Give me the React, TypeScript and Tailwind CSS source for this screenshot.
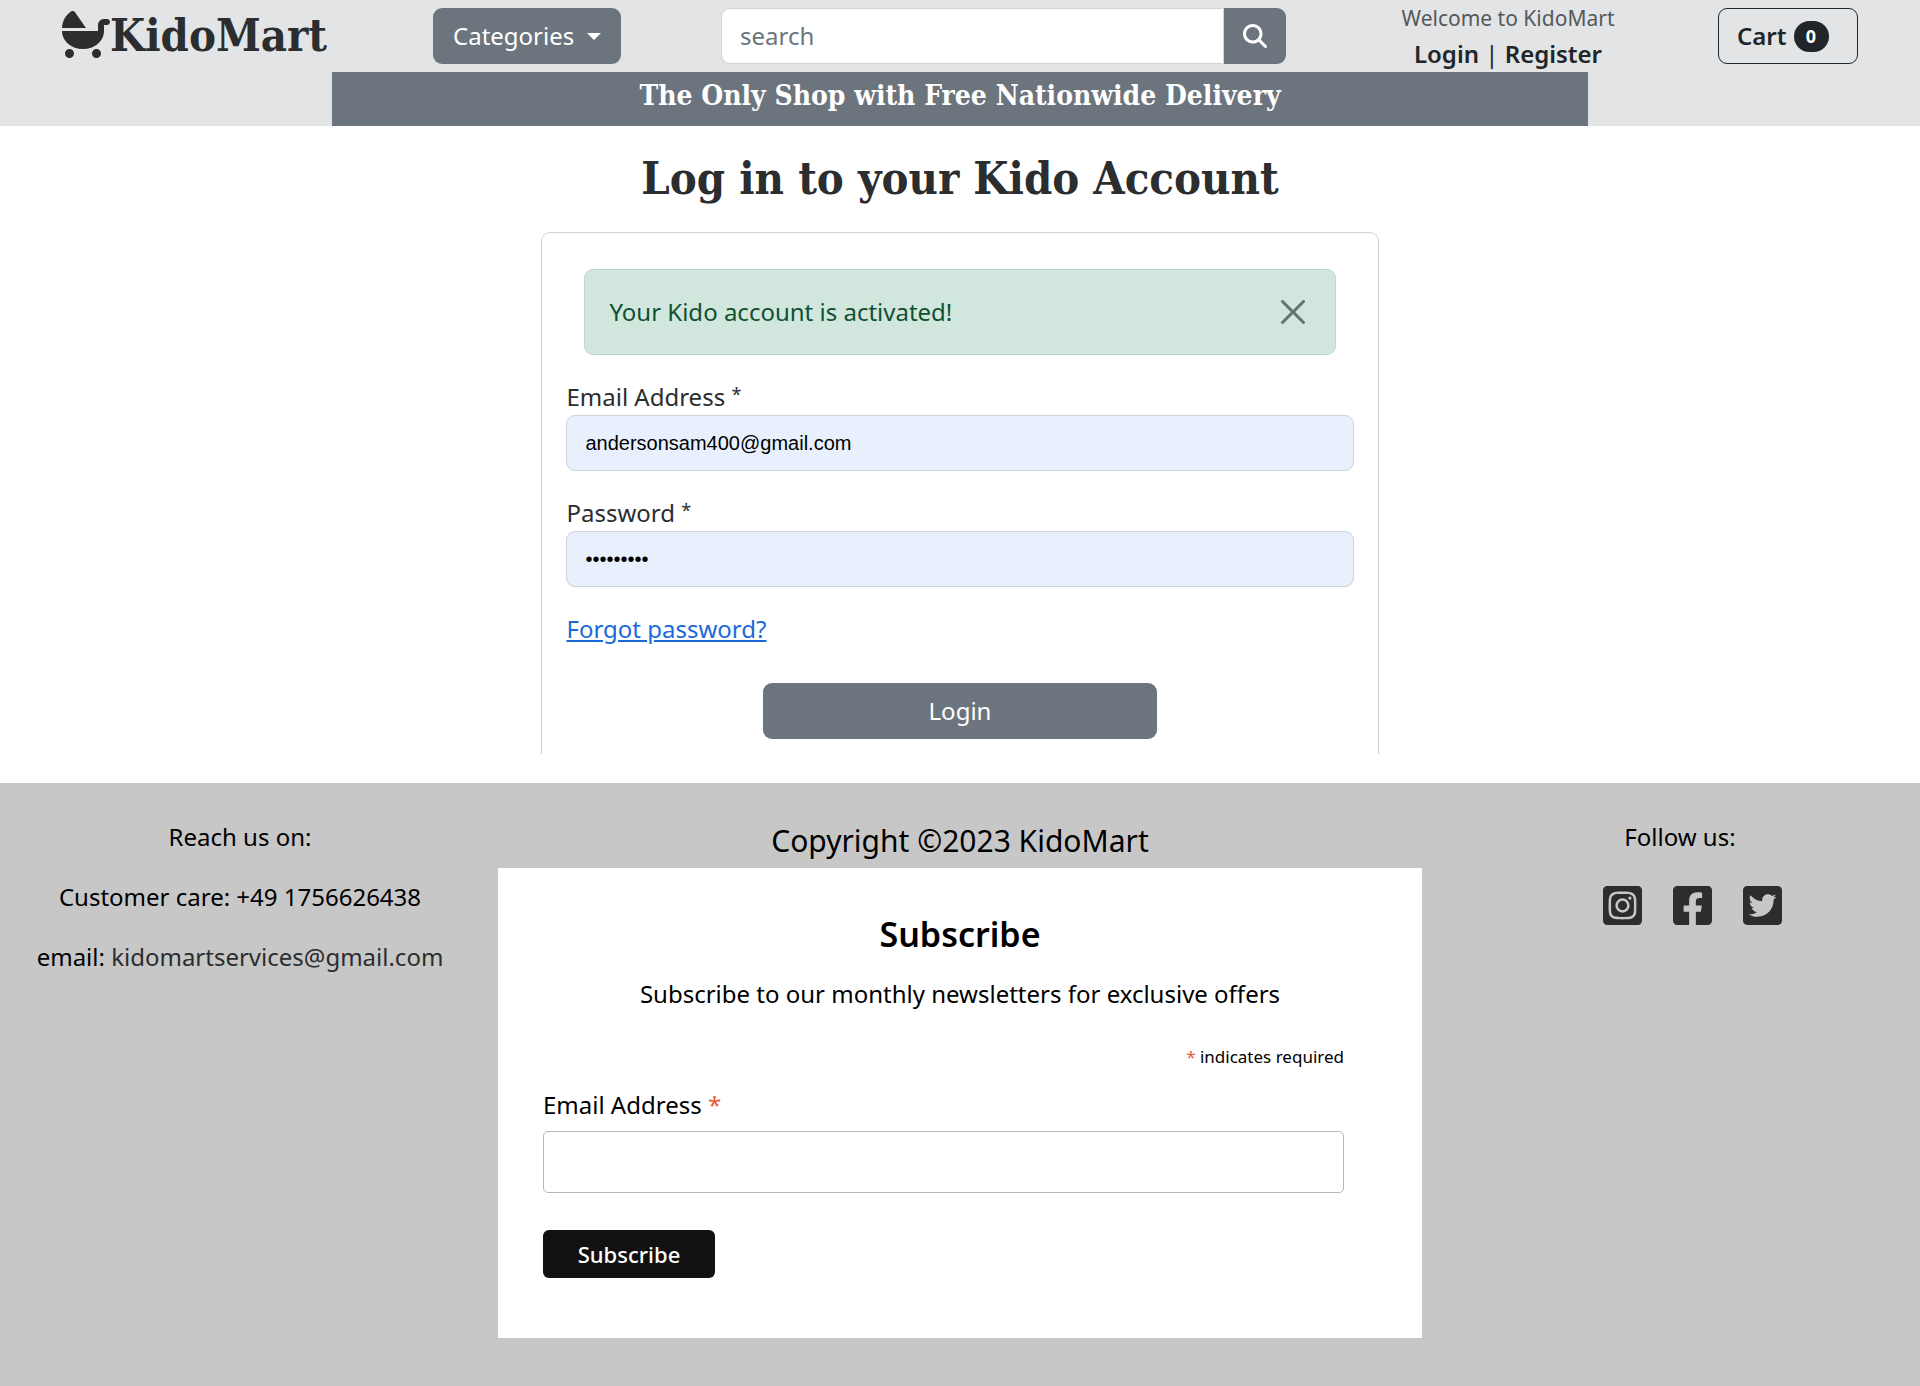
import { FaFacebookSquare, FaInstagramSquare, FaTwitterSquare } from 'react-icons/fa';
import { FaBabyCarriage, FaMagnifyingGlass } from 'react-icons/fa6';

const slab = "font-['DejaVu_Serif_Condensed','DejaVu_Serif',serif] font-bold";

function Header() {
  return (
    <header className="bg-[#e2e4e5]">
      <nav className="flex h-[72px] items-center justify-between px-[62px]">
        <a href="#" className={`${slab} flex w-[271px] items-center text-[45px] leading-[48px] text-[#2b2d2f]`}>
          <FaBabyCarriage className="mb-1 size-12 shrink-0" />
          KidoMart
        </a>
        <button type="button" className="flex h-14 w-[188px] items-center justify-between rounded-[9px] bg-[#6c757d] px-5 text-white">
          Categories
          <span className="border-x-[7px] border-t-[7px] border-x-transparent border-t-white" />
        </button>
        <form className="flex h-14 w-[565px]">
          <input
            type="search"
            aria-label="search"
            placeholder="search"
            className="min-w-0 flex-1 rounded-l-[9px] border border-[#ced4da] bg-white px-[18px] placeholder:text-[#6c757d] placeholder:opacity-100"
          />
          <button type="button" aria-label="Search" className="flex w-[62px] items-center justify-center rounded-r-[9px] bg-[#6c757d] text-white">
            <FaMagnifyingGlass className="size-6" />
          </button>
        </form>
        <div className="w-[232px] pl-3 text-center whitespace-nowrap text-[#212529]">
          <p className="text-[21px] leading-9 text-[#55595c]">Welcome to KidoMart</p>
          <p className="leading-9">
            <a href="#" className="font-semibold">Login</a> | <a href="#" className="font-semibold">Register</a>
          </p>
        </div>
        <button type="button" className="flex h-14 w-[140px] items-center gap-[7px] rounded-[9px] border border-[#212529] px-[18px] font-semibold text-[#212529]">
          Cart
          <span className="flex h-[31px] w-[35px] items-center justify-center rounded-full bg-[#212529] text-[18px] font-bold text-white">0</span>
        </button>
      </nav>
      <p className={`${slab} mx-auto h-[54px] w-[65.4%] bg-[#6c747d] text-center text-[28px] leading-[48px] text-white`}>
        The Only Shop with Free Nationwide Delivery
      </p>
    </header>
  );
}

function Field({ id, label, type, value }: { id: string; label: string; type: string; value: string }) {
  return (
    <div className="mb-6">
      <label htmlFor={id} className="block h-9 leading-9 text-[#2b2d2f]">
        {label} <span className="align-[5px] text-[18px] leading-none">*</span>
      </label>
      <input
        id={id}
        type={type}
        defaultValue={value}
        className="block h-14 w-full rounded-[9px] border border-[#ced4da] bg-[#e8f0fe] px-[18px] font-['Liberation_Sans',sans-serif] text-[20px] text-black"
      />
    </div>
  );
}

function LoginCard() {
  return (
    <main className="bg-white pb-[29px]">
      <h1 className={`${slab} py-6 text-center text-[45px] leading-[58px] text-[#2b2d2f]`}>Log in to your Kido Account</h1>
      <form className="mx-auto w-[43.6%] rounded-t-[9px] border border-b-0 border-[#d3d4d5] px-6 pt-9 pb-[15px]">
        <div role="alert" className="mx-[18px] mb-6 flex h-[86px] items-center justify-between rounded-[9px] border border-[#bdd9cd] bg-[#d1e7dd] pr-[30px] pl-6 text-[#0f5132]">
          Your Kido account is activated!
          <button type="button" aria-label="Close" className="opacity-50">
            <svg viewBox="0 0 16 16" fill="#000" className="size-6">
              <path d="M.293.293a1 1 0 0 1 1.414 0L8 6.586 14.293.293a1 1 0 1 1 1.414 1.414L9.414 8l6.293 6.293a1 1 0 0 1-1.414 1.414L8 9.414l-6.293 6.293a1 1 0 0 1-1.414-1.414L6.586 8 .293 1.707a1 1 0 0 1 0-1.414z" />
            </svg>
          </button>
        </div>
        <Field id="email" label="Email Address" type="email" value="andersonsam400@gmail.com" />
        <Field id="password" label="Password" type="password" value="kidomart1" />
        <a href="#" className="inline-block leading-9 text-[#1a6ad9] underline">Forgot password?</a>
        <button type="button" className="mx-auto mt-9 block h-14 w-1/2 rounded-[9px] bg-[#6c747d] text-white">Login</button>
      </form>
    </main>
  );
}

function Subscribe() {
  return (
    <form className="bg-white px-[45px] pt-10 pb-[60px]">
      <h2 className="text-center text-[34px] leading-[52px] font-semibold">Subscribe</h2>
      <p className="mt-4 text-center leading-9">Subscribe to our monthly newsletters for exclusive offers</p>
      <div className="mr-[33px]">
        <p className="mt-[33px] text-right text-[17px] leading-6">
          <span className="text-[#e85c41]">*</span> indicates required
        </p>
        <label htmlFor="newsletter" className="mt-[18px] block leading-9">
          Email Address <span className="text-[#e85c41]">*</span>
        </label>
        <input id="newsletter" type="email" className="mt-2 block h-[62px] w-full rounded-[5px] border border-[#b5b7b8] bg-white px-4" />
        <button type="button" className="mt-[37px] block h-12 w-[172px] rounded-[6px] bg-[#111] text-[22px] font-medium text-white">Subscribe</button>
      </div>
    </form>
  );
}

function Footer() {
  return (
    <footer className="grid flex-1 grid-cols-[1fr_2fr_1fr] bg-[#c7c7c7] pt-9 pb-12 text-black">
      <div className="flex flex-col gap-6 text-center leading-9 whitespace-nowrap">
        <p>Reach us on:</p>
        <p>Customer care: +49 1756626438</p>
        <p>
          email: <a href="#" className="text-[#2b2d2f]">kidomartservices@gmail.com</a>
        </p>
      </div>
      <div className="px-[18px]">
        <p className="pb-[5px] text-center text-[30px] leading-[44px]">Copyright ©2023 KidoMart</p>
        <Subscribe />
      </div>
      <div className="text-center leading-9">
        <p>Follow us:</p>
        <div className="mt-7 flex justify-center gap-[31px] pl-6 text-[#2b2d2f]">
          <a href="#" aria-label="Instagram"><FaInstagramSquare className="h-[45px] w-[39px]" /></a>
          <a href="#" aria-label="Facebook"><FaFacebookSquare className="h-[45px] w-[39px]" /></a>
          <a href="#" aria-label="Twitter"><FaTwitterSquare className="h-[45px] w-[39px]" /></a>
        </div>
      </div>
    </footer>
  );
}

export default function App() {
  return (
    <div className="flex min-h-screen flex-col bg-white font-['Noto_Sans',sans-serif] text-[24px]">
      <Header />
      <LoginCard />
      <Footer />
    </div>
  );
}
